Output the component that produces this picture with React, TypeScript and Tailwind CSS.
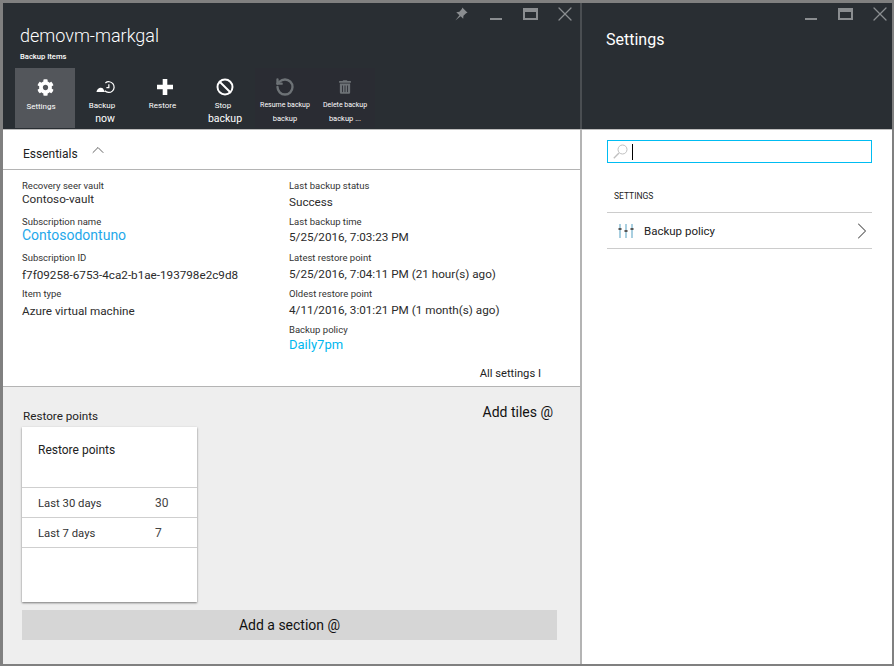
import React from 'react';
import { Ban, RotateCw, ChevronUp, ChevronRight, X } from 'lucide-react';
import { FaCog, FaTrashAlt } from 'react-icons/fa';

const font = "font-['Roboto','Liberation_Sans',sans-serif]";

function WindowButtons({ pin, closeGap }: { pin?: boolean; closeGap: string }) {
  return (
    <div className="flex h-[20px] items-center justify-end text-[#8a8d90]">
      {pin && (
        <svg viewBox="0 0 16 16" className="mr-[22px] h-[14px] w-[14px]" fill="currentColor">
          <path d="M9.5 0.5 15.5 6.5 13.8 7 10.8 10 10.5 13.5 7.6 10.6 1.5 15.5 6.2 9.3 2.6 6 6.2 5.4 9 2.3Z" />
        </svg>
      )}
      <div className="mr-[21px] mt-[9px] h-[2px] w-[12px] bg-current" />
      <div className="h-[12px] w-[15px] border-2 border-t-[4px] border-current" />
      <X className={`ml-[15px] h-[24px] w-[24px] ${closeGap}`} strokeWidth={1.3} />
    </div>
  );
}

function ToolButton({
  icon,
  line1,
  line2,
  active,
  dim,
  labelClass,
}: {
  icon: React.ReactNode;
  line1: string;
  line2?: string;
  active?: boolean;
  dim?: boolean;
  labelClass?: string;
}) {
  return (
    <div
      className={`flex h-[60px] w-[60px] flex-col items-center pt-[8px] ${active ? 'bg-[#53565b]' : ''} ${dim ? 'bg-[#2a2c33]' : ''}`}
    >
      <div className="flex h-[22px] items-center justify-center">{icon}</div>
      <div className={`whitespace-nowrap text-center text-white ${dim ? 'mt-[1px] text-[7px] leading-[13px]' : 'mt-[1px] text-[8px] leading-[13px]'} ${labelClass ?? ''}`}>
        {line1}
      </div>
      {line2 && (
        <div className={`whitespace-nowrap text-white ${dim ? 'text-[7.5px] leading-[13px]' : 'text-[10.5px] leading-[13px]'}`}>{line2}</div>
      )}
    </div>
  );
}

function Field({ label, value, valueClass }: { label: string; value: string; valueClass?: string }) {
  return (
    <div className="h-[36px]">
      <div className="text-[9.5px] leading-[14px] text-[#333]">{label}</div>
      <div className={`leading-[17px] ${valueClass ?? 'text-[11.7px] text-[#2b2b2b]'}`}>{value}</div>
    </div>
  );
}

function TileRow({ label, count }: { label: string; count: string }) {
  return (
    <div className="flex h-[30px] items-center border-t border-[#cfcfcf] pl-[16px] text-[11.3px]">
      <span className="w-[117px] pt-[3px] text-[#333]">{label}</span>
      <span className="text-[12px] text-[#444]">{count}</span>
    </div>
  );
}

export default function App() {
  return (
    <div className={`${font} flex h-[666px] w-[894px] border-t-[3px] border-r-2 border-b-2 border-l-[3px] border-[#808080] bg-white`}>
      {/* Left blade */}
      <div className="flex w-[577px] flex-col">
        <div className="h-[126px] bg-[#292e33] pt-[1px]">
          <WindowButtons pin closeGap="mr-[3px]" />
          <div className="pl-[17px] text-[18px] font-light leading-[24px] text-white">demovm-markgal</div>
          <div className="mt-[3px] pl-[17px] text-[7.6px] font-medium leading-[12px] text-white">Backup Items</div>
          <div className="mt-[5px] flex pl-[12px]">
            <ToolButton active icon={<FaCog className="h-[17px] w-[17px] text-white" />} line1="Settings" labelClass="mt-[2px] mr-[8px]" />
            <ToolButton
              icon={
                <svg viewBox="0 0 17 13" className="h-[15px] w-[19px] text-white" fill="none" stroke="currentColor" strokeWidth="1.1">
                  <path d="M8.400 2.400a4.800 4.800 0 1 1-0.500 7" />
                  <path d="M11.500 3.500v3.200h-2.200" />
                  <path d="M0.500 10.500c0-2 2-3.800 4-3.800 1.200 0 2 .8 2.500 2l1 1.800z" fill="currentColor" stroke="none" />
                </svg>
              }
              line1="Backup"
              line2="now"
              labelClass="mr-[6px]"
            />
            <ToolButton
              icon={
                <svg viewBox="0 0 16 16" className="h-[16px] w-[16px] fill-white">
                  <path d="M5.700 0h4.600v5.700H16v4.600h-5.700V16H5.700v-5.700H0V5.700h5.700z" />
                </svg>
              }
              line1="Restore"
              labelClass="mr-[5px]"
            />
            <ToolButton icon={<Ban className="h-[18px] w-[18px] text-white" strokeWidth={2.6} />} line1="Stop" line2="backup" labelClass="mr-[4px]" />
            <ToolButton dim icon={<RotateCw className="h-[20px] w-[20px] -scale-x-100 text-[#6d7276]" strokeWidth={2.8} />} line1="Resume backup" line2="backup" />
            <ToolButton dim icon={<FaTrashAlt className="h-[14px] w-[12px] text-[#6d7276]" />} line1="Delete backup" line2="backup  ..." />
          </div>
        </div>
        <div className="h-px bg-[#bdbdbd]" />

        <div className="flex h-[40px] items-center border-b border-[#b4b4b4] pl-[20px] text-[12px] text-[#222]">
          <span className="mt-[8px]">Essentials</span>
          <ChevronUp className="ml-[10px] h-[20px] w-[20px] text-[#444]" strokeWidth={1} />
        </div>

        <div className="flex h-[217px] flex-col border-b border-[#b4b4b4]">
          <div className="flex pt-[9px] pl-[19px]">
            <div className="w-[267px]">
              <Field label="Recovery seer vault" value="Contoso-vault" valueClass="-mt-[2px] text-[11.7px] text-[#2b2b2b]" />
              <Field label="Subscription name" value="Contosodontuno" valueClass="-mt-[2px] text-[14px] text-[#1fa8ea]" />
              <Field label="Subscription ID" value="f7f09258-6753-4ca2-b1ae-193798e2c9d8" valueClass="mt-[2px] text-[11.7px] text-[#2b2b2b]" />
              <Field label="Item type" value="Azure virtual machine" valueClass="mt-[2px] text-[11.7px] text-[#2b2b2b]" />
            </div>
            <div>
              <Field label="Last backup status" value="Success" valueClass="mt-px text-[11.7px] text-[#2b2b2b]" />
              <Field label="Last backup time" value="5/25/2016, 7:03:23 PM" />
              <Field label="Latest restore point" value="5/25/2016, 7:04:11 PM (21 hour(s) ago)" valueClass="mt-px text-[11.7px] text-[#2b2b2b]" />
              <Field label="Oldest restore point" value="4/11/2016, 3:01:21 PM (1 month(s) ago)" valueClass="mt-px text-[11.7px] text-[#2b2b2b]" />
              <Field label="Backup policy" value="Daily7pm" valueClass="-mt-px text-[13px] text-[#00b7ef]" />
            </div>
          </div>
          <div className="mt-auto mb-[3px] self-end pr-[39px] text-[11.2px] text-[#222]">All settings I</div>
        </div>

        <div className="flex-1 bg-[#eeeeee] px-[19px]">
          <div className="flex h-[40px] items-end justify-between pr-[8px]">
            <span className="mb-[3px] pl-px text-[11.7px] leading-[16px] text-[#222]">Restore points</span>
            <span className="mb-[6px] text-[14px] leading-[18px] text-[#111]">Add tiles @</span>
          </div>
          <div className="h-[175px] w-[175px] bg-white shadow-[0_1px_2px_rgba(0,0,0,0.5)]">
            <div className="h-[60px] pt-[15px] pl-[16px] text-[12px] leading-[16px] text-[#222]">Restore points</div>
            <TileRow label="Last 30 days" count="30" />
            <TileRow label="Last 7 days" count="7" />
            <div className="border-t border-[#cfcfcf]" />
          </div>
          <div className="mt-[8px] flex h-[30px] w-[535px] items-center justify-center bg-[#d6d6d6] text-[14px] text-[#111]">Add a section @</div>
        </div>
      </div>

      {/* Divider */}
      <div className="flex w-[2px] flex-col bg-[#b4b4b4]">
        <div className="h-[126px] bg-[#4a4e52]" />
      </div>

      {/* Right blade */}
      <div className="flex min-w-0 flex-1 flex-col">
        <div className="h-[126px] bg-[#292e33] pt-[1px]">
          <WindowButtons closeGap="mr-0" />
          <div className="mt-[5px] pl-[24px] text-[16px] leading-[22px] text-white">Settings</div>
        </div>
        <div className="h-px bg-[#bdbdbd]" />
        <div className="pr-[20px] pl-[25px]">
          <div className="mt-[10px] flex h-[23px] w-[265px] items-center border border-[#00bcf2] pl-[5px]">
            <svg viewBox="0 0 15 15" className="h-[15px] w-[15px]" fill="none" stroke="#c0c0c0" strokeWidth="1">
              <circle cx="9.500" cy="5.500" r="4.500" />
              <path d="M6 9 0.800 14.200" strokeWidth="1.400" />
            </svg>
            <div className="ml-[4px] h-[16px] w-px bg-black" />
          </div>
          <div className="mt-[27px] pl-[7px] text-[8.5px] leading-[12px] text-[#222]">SETTINGS</div>
          <div className="mt-[10px] flex h-[37px] items-center border-y border-[#cccccc]">
            <svg viewBox="0 0 16 16" className="ml-[11px] h-[16px] w-[16px]" fill="none" strokeWidth="2">
              <path d="M2 1v14M8 1v14M14 1v14" stroke="#a9cfe0" />
              <path d="M0.500 6h3M6.500 8h3M12.500 6h3" stroke="#555" />
            </svg>
            <span className="ml-[10px] mt-[2px] text-[11.5px] text-[#222]">Backup policy</span>
            <ChevronRight className="-mr-[4px] ml-auto h-[28px] w-[28px] text-[#555]" strokeWidth={0.9} />
          </div>
        </div>
      </div>
    </div>
  );
}
